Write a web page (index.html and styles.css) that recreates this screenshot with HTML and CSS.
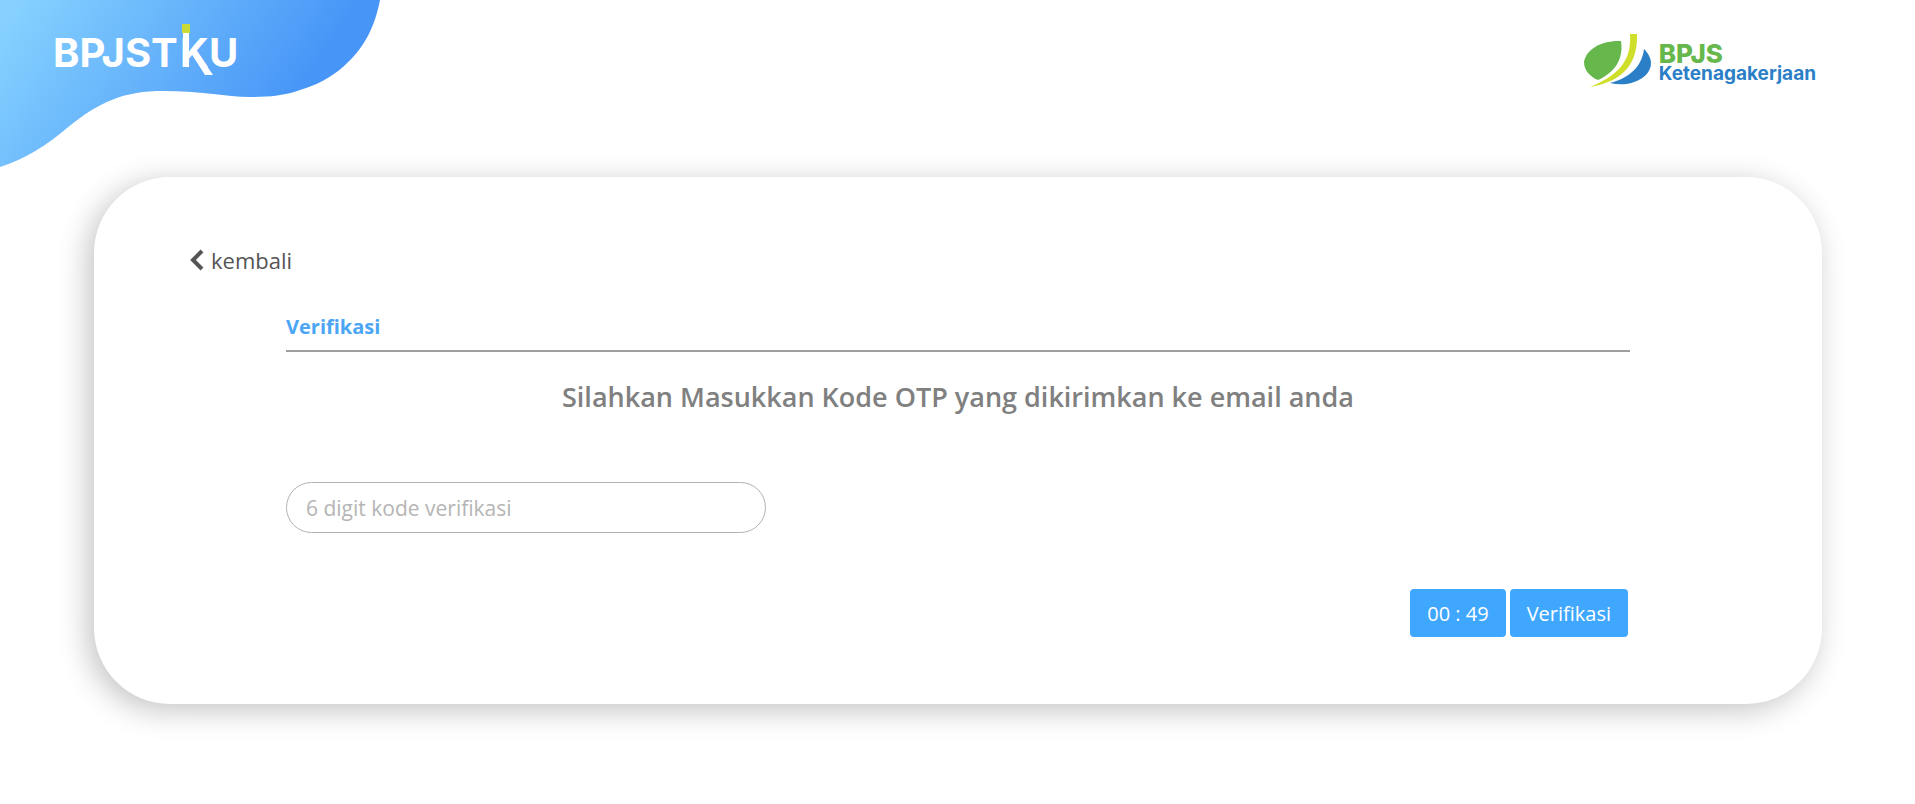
FILE: index.html
```html
<!DOCTYPE html>
<html lang="id">
<head>
    <meta charset="UTF-8">
    <meta name="viewport" content="width=device-width, initial-scale=1.0">
    <title>BPJSTKU - Verifikasi</title>
    <link rel="stylesheet" href="styles.css">
</head>
<body>
    <header class="header">
        <svg class="header-wave" width="384" height="170" viewBox="0 0 384 170" aria-hidden="true">
            <defs>
                <linearGradient id="wave" gradientUnits="userSpaceOnUse" x1="20" y1="0" x2="250" y2="160">
                    <stop offset="0" stop-color="#86d1ff"/>
                    <stop offset="1" stop-color="#4796f7"/>
                </linearGradient>
            </defs>
            <path fill="url(#wave)" d="M0 0H380C374 31 362 50 343 67C330 78 317 85 300 90C283 96 268 97 250 97C237 97 226 95 213 94C196 92 180 91 163 91C125 91 100 101 67 128C47 145 25 159 0 167Z"/>
        </svg>
        <svg class="logo-app" width="200" height="60" viewBox="0 0 200 60" role="img" aria-label="BPJSTKU">
            <g class="logo-app-text">
                <text x="11" y="47">BPJST</text>
                <text x="138" y="47">K</text>
                <text x="167" y="47">U</text>
            </g>
            <path fill="#fff" d="M141 13H147V47H141ZM149 33H156L171 55H163Z"/>
            <rect x="140" y="4" width="8" height="9" fill="#cadb36"/>
        </svg>
        <a class="logo-bpjs" href="#">
            <svg width="68" height="54" viewBox="0 0 68 54" aria-hidden="true">
                <path fill="#66b84c" d="M37 7C18 6 2 15 0 28C0 36 6 43 14 46C29 39 40 27 37 7Z"/>
                <path fill="#cfdf29" d="M46 0H53C54 28 41 47 6 53C32 42 48 29 46 0Z"/>
                <path fill="#2b7fc6" d="M60 15C58 32 46 44 26 49C46 54 67 44 67 29C67 24 64 19 60 15Z"/>
            </svg>
            <span class="logo-bpjs-text">
                <span class="logo-bpjs-top">BPJS</span>
                <span class="logo-bpjs-bottom">Ketenagakerjaan</span>
            </span>
        </a>
    </header>

    <main class="card">
        <a class="back" href="#">
            <svg width="14" height="22" viewBox="0 0 14 22" aria-hidden="true">
                <path fill="none" stroke="#555" stroke-width="4" d="M12 2L3 11L12 20"/>
            </svg>
            kembali
        </a>
        <form class="otp">
            <h1 class="otp-title">Verifikasi</h1>
            <p class="otp-info">Silahkan Masukkan Kode OTP yang dikirimkan ke email anda</p>
            <input class="otp-input" type="text" inputmode="numeric" maxlength="6" placeholder="6 digit kode verifikasi" aria-label="6 digit kode verifikasi">
            <div class="otp-actions">
                <button class="btn" type="button">00 : 49</button>
                <button class="btn" type="submit">Verifikasi</button>
            </div>
        </form>
    </main>
</body>
</html>
```

FILE: styles.css
```css
* {
    box-sizing: border-box;
}

body {
    margin: 0;
    min-height: 100vh;
    padding-bottom: 60px;
    font-family: "Segoe UI", "Open Sans", "Noto Sans", sans-serif;
    background: #fff;
    color: #555;
}

.header {
    position: relative;
    display: flex;
    justify-content: space-between;
    align-items: flex-start;
    height: 177px;
    padding: 20px 99px 0 42px;
}

.header-wave {
    position: absolute;
    top: 0;
    left: 0;
}

.logo-app {
    position: relative;
}

.logo-app-text {
    font-family: Inter, sans-serif;
    font-size: 40px;
    font-weight: 700;
    fill: #fff;
}

.logo-bpjs {
    display: flex;
    gap: 7px;
    padding-top: 14px;
    text-decoration: none;
    font-family: Inter, sans-serif;
    font-weight: 700;
}

.logo-bpjs-text {
    display: flex;
    flex-direction: column;
    padding-top: 8px;
}

.logo-bpjs-top {
    font-size: 26px;
    font-weight: 800;
    line-height: 24px;
    color: #66b84c;
}

.logo-bpjs-bottom {
    font-size: 19px;
    line-height: 16px;
    color: #2b7fc6;
}

.card {
    margin: 0 93px 0 94px;
    padding: 64px 96px 67px;
    border-radius: 76px;
    background: #fff;
    box-shadow: -6px 6px 30px rgba(0, 0, 0, 0.24);
}

.back {
    display: inline-flex;
    align-items: center;
    gap: 7px;
    font-size: 22px;
    line-height: 38px;
    color: #555;
    text-decoration: none;
}

.otp {
    padding: 0 96px;
}

.otp-title {
    margin: 34px 0 0;
    padding-bottom: 9px;
    border-bottom: 2px solid #9e9e9e;
    font-size: 20px;
    font-weight: 700;
    line-height: 28px;
    color: #4ba6f5;
}

.otp-info {
    margin: 24px 0 64px;
    font-size: 27px;
    font-weight: 600;
    line-height: 42px;
    text-align: center;
    color: #808080;
}

.otp-input {
    display: block;
    width: 480px;
    max-width: 100%;
    height: 51px;
    padding: 0 19px;
    border: 1px solid #b2b2b2;
    border-radius: 26px;
    font-family: inherit;
    font-size: 21px;
    color: #555;
    outline: none;
}

.otp-input::placeholder {
    color: #b5b5b5;
}

.otp-actions {
    display: flex;
    justify-content: flex-end;
    gap: 4px;
    margin-top: 56px;
    padding-right: 2px;
}

.btn {
    height: 48px;
    padding: 0 17px;
    border: none;
    border-radius: 4px;
    background: #40a7ff;
    font-family: inherit;
    font-size: 20px;
    color: #fff;
    cursor: pointer;
}
```
